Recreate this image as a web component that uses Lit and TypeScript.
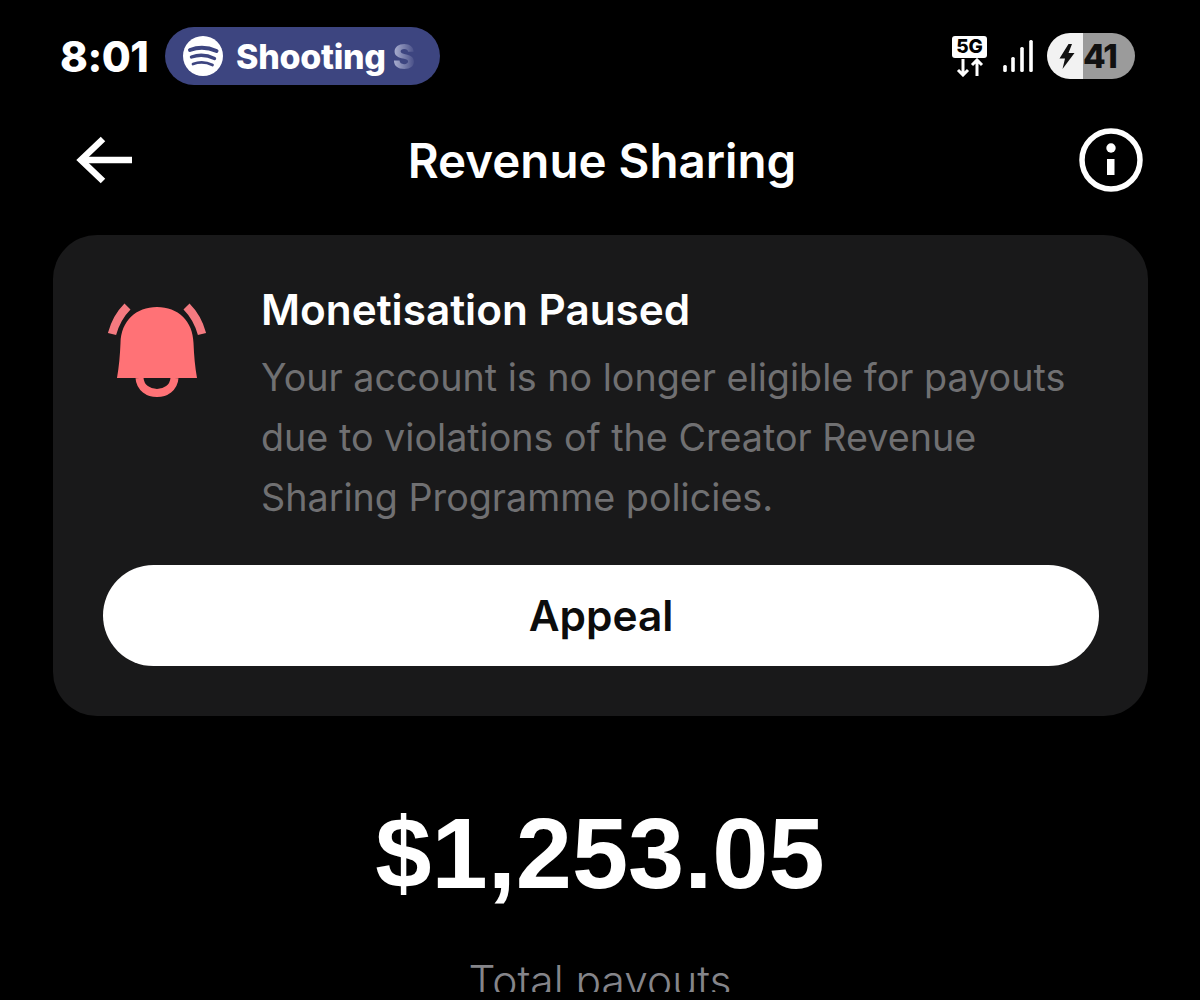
import { LitElement, html, css } from 'lit'
import { customElement } from 'lit/decorators.js'

@customElement('app-root')
export class AppRoot extends LitElement {
  static styles = css`
    :host {
      display: block;
      width: 1200px;
      height: 1000px;
      overflow: hidden;
      background: #000;
      color: #fff;
      font-family: Inter, 'Noto Sans', sans-serif;
    }

    .status {
      display: flex;
      align-items: center;
      height: 58px;
      padding: 27px 65px 0 60px;
    }

    .status__time {
      width: 105px;
      font-size: 42px;
      font-weight: 800;
      letter-spacing: -0.5px;
    }

    .pill {
      display: flex;
      align-items: center;
      gap: 13px;
      box-sizing: border-box;
      width: 275px;
      height: 58px;
      padding-left: 18px;
      border-radius: 29px;
      background: #3d4580;
    }

    .pill__text {
      font-size: 34px;
      font-weight: 800;
      white-space: nowrap;
      letter-spacing: -0.3px;
    }

    .pill__fade {
      background: linear-gradient(90deg, #aeb3d3 0%, #454c85 100%);
      -webkit-background-clip: text;
      background-clip: text;
      color: transparent;
    }

    .status__right {
      display: flex;
      align-items: center;
      margin-left: auto;
      gap: 13px;
    }

    .net {
      display: flex;
      flex-direction: column;
      align-items: center;
      width: 35px;
    }

    .net__box {
      width: 35px;
      height: 22px;
      border-radius: 3px;
      background: #fff;
      color: #000;
      font-size: 19px;
      line-height: 22px;
      font-weight: 800;
      text-align: center;
    }

    .battery {
      display: flex;
      width: 88px;
      height: 46px;
      border-radius: 23px;
      overflow: hidden;
      color: #111;
    }

    .battery__l {
      display: flex;
      align-items: center;
      justify-content: center;
      width: 36px;
      padding-left: 3px;
      box-sizing: border-box;
      background: #f2f2f2;
    }

    .battery__r {
      flex: 1;
      background: #9b9b9b;
      font-size: 33px;
      font-weight: 800;
      line-height: 46px;
      letter-spacing: -1px;
    }

    .nav {
      display: flex;
      align-items: center;
      justify-content: space-between;
      height: 70px;
      margin-top: 40px;
      padding: 0 57px 0 76px;
    }

    .nav__title {
      margin-right: 7px;
      font-size: 47.5px;
      font-weight: 600;
    }

    .card {
      box-sizing: border-box;
      height: 481px;
      margin: 40px 52px 0 53px;
      padding: 50px 49px 0 50px;
      border-radius: 44px;
      background: #19191a;
    }

    .card__top {
      display: flex;
      height: 280px;
    }

    .card__icon {
      flex: none;
      width: 158px;
      padding-top: 12px;
    }

    .card__title {
      font-size: 42.3px;
      font-weight: 600;
      line-height: 50px;
    }

    .card__desc {
      margin: 0;
      padding-top: 12px;
      color: #707072;
      font-size: 37.7px;
      line-height: 60px;
    }

    .btn {
      display: block;
      width: 100%;
      height: 101px;
      border: 0;
      border-radius: 51px;
      background: #fff;
      color: #0c0c0c;
      font: 600 42.4px Inter, sans-serif;
    }

    .amount {
      margin-top: 82px;
      text-align: center;
      font-family: 'Liberation Sans', Arial, sans-serif;
      font-size: 101px;
      font-weight: 700;
      line-height: 110px;
    }

    .label {
      height: 36px;
      margin-top: 48px;
      overflow: hidden;
      text-align: center;
      color: #85858a;
      font-size: 42.5px;
      font-weight: 300;
      line-height: 50px;
    }
  `

  render () {
    return html`
      <div class="status">
        <div class="status__time">8:01</div>
        <div class="pill">
          <svg width="40" height="40" viewBox="0 0 40 40">
            <circle cx="20" cy="20" r="20" fill="#fff" />
            <g fill="none" stroke="#3d4580" stroke-linecap="round">
              <path d="M7 14 Q20 9 33.5 15" stroke-width="4" />
              <path d="M8.5 21 Q20 17 31.5 22.5" stroke-width="3.4" />
              <path d="M10 28 Q20 24.5 29.5 29" stroke-width="2.8" />
            </g>
          </svg>
          <span class="pill__text">Shooting <span class="pill__fade">S</span></span>
        </div>
        <div class="status__right">
          <div class="net">
            <div class="net__box">5G</div>
            <svg width="28" height="19" viewBox="0 0 28 19" fill="none" stroke="#fff" stroke-width="3">
              <path d="M7 1V17M2 12l5 5 5-5" />
              <path d="M21 18V2M16 7l5-5 5 5" />
            </svg>
          </div>
          <svg width="34" height="34" viewBox="0 0 34 34" fill="#fff">
            <rect x="3.2" y="26" width="3.6" height="7" rx="1.5" />
            <rect x="11.2" y="18" width="3.6" height="15" rx="1.5" />
            <rect x="20.2" y="8" width="3.6" height="25" rx="1.5" />
            <rect x="29.2" y="1" width="3.6" height="32" rx="1.5" />
          </svg>
          <div class="battery">
            <div class="battery__l">
              <svg width="16" height="25" viewBox="0 0 16 25">
                <path d="M9.5 0 .5 14.5H6L3.5 25l12-16h-6L13 0z" fill="#111" />
              </svg>
            </div>
            <div class="battery__r">41</div>
          </div>
        </div>
      </div>

      <div class="nav">
        <svg width="56" height="48" viewBox="0 0 56 48" fill="none" stroke="#fff" stroke-width="6.5">
          <path d="M56 24H6" />
          <path d="M27 3 5 24l22 21" />
        </svg>
        <div class="nav__title">Revenue Sharing</div>
        <svg width="64" height="64" viewBox="0 0 64 64">
          <circle cx="32" cy="32" r="29" fill="none" stroke="#fff" stroke-width="5.5" />
          <circle cx="32" cy="20" r="4.7" fill="#fff" />
          <rect x="28" y="31" width="7.5" height="16" fill="#fff" />
        </svg>
      </div>

      <div class="card">
        <div class="card__top">
          <div class="card__icon">
            <svg width="110" height="110" viewBox="0 0 110 110">
              <path fill="#ff7276" d="M14 81C16 70 17 58 17.5 46C18 24 33 10 54 10S90 24 90.5 46C91 58 92 70 94 81Z" />
              <path fill="none" stroke="#ff7276" stroke-width="8" d="M36.5 81C38 101 70 101 71.5 81" />
              <path fill="none" stroke="#f47a80" stroke-width="8.5" d="M9 37C12 26 17 17 24.5 9.5M99 37C96 26 91 17 83.5 9.5" />
            </svg>
          </div>
          <div>
            <div class="card__title">Monetisation Paused</div>
            <p class="card__desc">Your account is no longer eligible for payouts<br />due to violations of the Creator Revenue<br />Sharing Programme policies.</p>
          </div>
        </div>
        <button class="btn">Appeal</button>
      </div>

      <div class="amount">$1,253.05</div>
      <div class="label">Total payouts</div>
    `
  }
}
